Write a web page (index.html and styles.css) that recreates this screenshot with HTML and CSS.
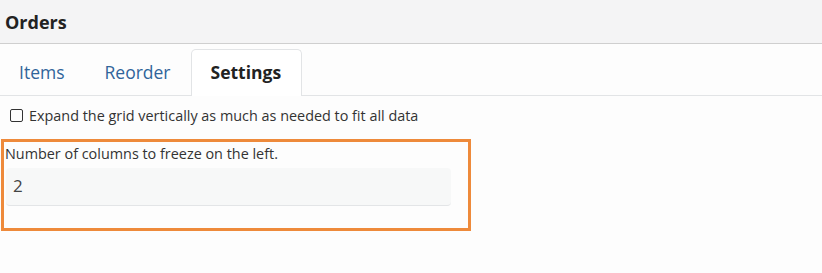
FILE: index.html
```html
<!DOCTYPE html>
<html>
<head>
<meta charset="utf-8">
<link rel="stylesheet" href="styles.css">
</head>
<body>
<div class="header"><span class="title">Orders</span></div>
<div class="tabs">
  <span class="tab">Items</span>
  <span class="tab">Reorder</span>
  <span class="tab active">Settings</span>
</div>
<div class="content">
  <label class="check"><span class="box"></span>Expand the grid vertically as much as needed to fit all data</label>
  <div class="highlight">
    <div class="field-label">Number of columns to freeze on the left.</div>
    <div class="input">2</div>
  </div>
</div>
</body>
</html>
```
FILE: styles.css
```css
html, body { margin: 0; padding: 0; background: #fdfdfd; }
body { font-family: "Open Sans", "Noto Sans", sans-serif; color: #222; width: 822px; height: 273px; overflow: hidden; }
.header { height: 43px; background: #f4f4f5; border-bottom: 1px solid #cfcfcf; display: flex; align-items: center; padding-left: 5px; }
.title { font-size: 18px; font-weight: 700; color: #222; margin-top: 0; }
.tabs { display: flex; align-items: flex-end; height: 51px; border-bottom: 1px solid #e2e4e6; padding-left: 0; }
.tab { font-size: 17.5px; color: #30649a; padding: 10px 19px 11px; line-height: 25px; border: 1px solid transparent; border-bottom: none; border-radius: 5px 5px 0 0; margin-bottom: -1px; }
.tab:first-child { border-left: none; }
.tab.active { color: #222; font-weight: 700; background: #fff; border-color: #e2e4e6; padding: 10px 20px 11px 19px; height: 25px; }
.content { padding: 9px 0 0 0; }
.check { display: flex; align-items: center; font-size: 14.4px; color: #333; padding-left: 10px; height: 20px; }
.box { width: 11px; height: 11px; border: 1.5px solid #333; border-radius: 2px; margin-right: 6px; }
.highlight { margin-top: 14px; margin-left: 1px; width: 463px; height: 84px; border: 3px solid #ee8a3b; padding: 2px 0 0 1px; }
.field-label { font-size: 14.4px; color: #333; line-height: 20px; margin-bottom: 4px; }
.input { width: 438px; height: 37px; margin-left: 1px; background: #f7f8f8; border-radius: 4px; border-bottom: 1px solid #e3e5e7; font-size: 17px; color: #444; padding-left: 7px; line-height: 36px; }
```
